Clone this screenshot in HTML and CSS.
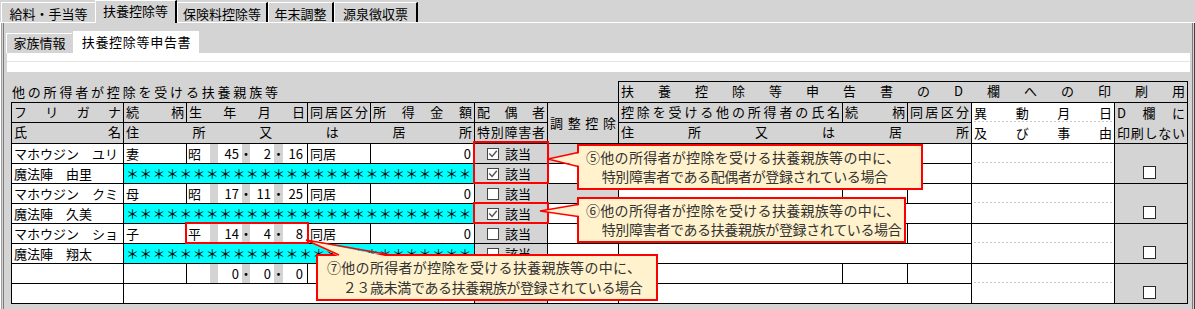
FILE: index.html
```html
<!DOCTYPE html>
<html lang="ja">
<head>
  <meta charset="UTF-8">
  <title>扶養控除等申告書</title>
  <link rel="stylesheet" href="styles.css">
</head>
<body>
  <div class="tabs">
    <div class="tab t1">給料・手当等</div>
    <div class="tab active">扶養控除等</div>
    <div class="tab t3">保険料控除等</div>
    <div class="tab t4">年末調整</div>
    <div class="tab t5">源泉徴収票</div>
  </div>

  <div class="page">
    <div class="subtabs">
      <div class="subtab">家族情報</div>
      <div class="subtab current">扶養控除等申告書</div>
    </div>
    <div class="band"></div>

    <div class="sheet">
      <div class="grid head">
        <div class="title j">他の所得者が控除を受ける扶養親族等</div>
        <div class="c hd j a-dhead">扶養控除等申告書のD欄への印刷用</div>
        <div class="c hd j a-kana">フリガナ</div>
        <div class="c hd j a-rel">続柄</div>
        <div class="c hd j a-birth">生年月日</div>
        <div class="c hd j a-live">同居区分</div>
        <div class="c hd j a-inc">所得金額</div>
        <div class="c hd j a-sp">配偶者</div>
        <div class="c hd j a-adj tall">調整控除</div>
        <div class="c hd j a-oname">控除を受ける他の所得者の氏名</div>
        <div class="c hd j a-orel">続柄</div>
        <div class="c hd j a-olive">同居区分</div>
        <div class="c hd a-move two"><span class="j">異動月日</span><span class="j">及び事由</span></div>
        <div class="c hd a-d two"><span class="j">D欄に</span><span class="j">印刷しない</span></div>
        <div class="c hd j a-name">氏名</div>
        <div class="c hd j a-addr">住所又は居所</div>
        <div class="c hd j a-sp2">特別障害者</div>
        <div class="c hd j a-oaddr">住所又は居所</div>
      </div>

      <!-- 1人目 -->
      <div class="grid person">
        <div class="c a-kana">マホウジン　ユリ</div>
        <div class="c a-rel">妻</div>
        <div class="c a-birth bd"><span class="era">昭</span><span class="gap"></span><span class="num">45</span><span class="dot">・</span><span class="num">2</span><span class="dot d2">・</span><span class="num last">16</span></div>
        <div class="c a-live">同居</div>
        <div class="c a-inc r">0</div>
        <div class="c a-sp chk"><span class="box on"><svg viewBox="0 0 10 10"><path d="M1.3 4.6 L4.1 7.4 L8.8 1.8"/></svg></span>該当</div>
        <div class="c a-adj off"></div>
        <div class="c a-oname"></div>
        <div class="c a-orel"></div>
        <div class="c a-olive"></div>
        <div class="c a-move"></div>
        <div class="c a-d dcell"><span class="box big"></span></div>
        <div class="c a-name">魔法陣　由里</div>
        <div class="c a-addr cyan">＊＊＊＊＊＊＊＊＊＊＊＊＊＊＊＊＊＊＊＊＊＊＊＊＊＊</div>
        <div class="c a-sp2 chk"><span class="box on"><svg viewBox="0 0 10 10"><path d="M1.3 4.6 L4.1 7.4 L8.8 1.8"/></svg></span>該当</div>
        <div class="c a-adj2"></div>
        <div class="c a-oaddr"></div>
        <div class="mark m-both"></div>
      </div>

      <!-- 2人目 -->
      <div class="grid person">
        <div class="c a-kana">マホウジン　クミ</div>
        <div class="c a-rel">母</div>
        <div class="c a-birth bd"><span class="era">昭</span><span class="gap"></span><span class="num">17</span><span class="dot">・</span><span class="num">11</span><span class="dot d2">・</span><span class="num last">25</span></div>
        <div class="c a-live">同居</div>
        <div class="c a-inc r">0</div>
        <div class="c a-sp chk"><span class="box"></span>該当</div>
        <div class="c a-adj off"></div>
        <div class="c a-oname"></div>
        <div class="c a-orel"></div>
        <div class="c a-olive"></div>
        <div class="c a-move"></div>
        <div class="c a-d dcell"><span class="box big"></span></div>
        <div class="c a-name">魔法陣　久美</div>
        <div class="c a-addr cyan">＊＊＊＊＊＊＊＊＊＊＊＊＊＊＊＊＊＊＊＊＊＊＊＊＊＊</div>
        <div class="c a-sp2 chk"><span class="box on"><svg viewBox="0 0 10 10"><path d="M1.3 4.6 L4.1 7.4 L8.8 1.8"/></svg></span>該当</div>
        <div class="c a-adj2"></div>
        <div class="c a-oaddr"></div>
        <div class="mark m-low"></div>
      </div>

      <!-- 3人目 -->
      <div class="grid person">
        <div class="c a-kana">マホウジン　ショ</div>
        <div class="c a-rel">子</div>
        <div class="c a-birth bd"><span class="era">平</span><span class="gap"></span><span class="num">14</span><span class="dot">・</span><span class="num">4</span><span class="dot d2">・</span><span class="num last">8</span></div>
        <div class="c a-live">同居</div>
        <div class="c a-inc r">0</div>
        <div class="c a-sp chk"><span class="box"></span>該当</div>
        <div class="c a-adj"></div>
        <div class="c a-oname"></div>
        <div class="c a-orel"></div>
        <div class="c a-olive"></div>
        <div class="c a-move"></div>
        <div class="c a-d dcell"><span class="box big"></span></div>
        <div class="c a-name">魔法陣　翔太</div>
        <div class="c a-addr cyan">＊＊＊＊＊＊＊＊＊＊＊＊＊＊＊＊＊＊＊＊＊＊＊＊＊＊</div>
        <div class="c a-sp2 chk"><span class="box"></span>該当</div>
        <div class="c a-adj2"></div>
        <div class="c a-oaddr"></div>
        <div class="mark m-birth"></div>
      </div>

      <!-- 4人目（空欄） -->
      <div class="grid person">
        <div class="c a-kana"></div>
        <div class="c a-rel"></div>
        <div class="c a-birth bd"><span class="era"></span><span class="gap"></span><span class="num">0</span><span class="dot">・</span><span class="num">0</span><span class="dot d2">・</span><span class="num last">0</span></div>
        <div class="c a-live"></div>
        <div class="c a-inc r"></div>
        <div class="c a-sp chk"></div>
        <div class="c a-adj"></div>
        <div class="c a-oname"></div>
        <div class="c a-orel"></div>
        <div class="c a-olive"></div>
        <div class="c a-move"></div>
        <div class="c a-d dcell"><span class="box big"></span></div>
        <div class="c a-name"></div>
        <div class="c a-addr"></div>
        <div class="c a-sp2 chk"></div>
        <div class="c a-adj2"></div>
        <div class="c a-oaddr"></div>
      </div>
    </div>
  </div>

  <div class="callout n5"><span class="l1">⑤他の所得者が控除を受ける扶養親族等の中に、</span><span class="l2">　特別障害者である配偶者が登録されている場合</span></div>
  <div class="callout n6"><span class="l1">⑥他の所得者が控除を受ける扶養親族等の中に、</span><span class="l2">　特別障害者である扶養親族が登録されている場合</span></div>
  <div class="callout n7"><span class="l1">⑦他の所得者が控除を受ける扶養親族等の中に、</span><span class="l2">　２３歳未満である扶養親族が登録されている場合</span></div>

  <svg class="pointers" width="1195" height="309" viewBox="0 0 1195 309">
    <polygon class="fill" points="580,153 548,159 580,166"/>
    <polyline class="edge" points="578,152.5 548,159 578,166.5"/>
    <polygon class="fill" points="580,205 540,211 580,216"/>
    <polyline class="edge" points="578,204.5 540,211 578,216.5"/>
    <polygon class="fill" points="340,257 306,240 390,257"/>
    <polyline class="edge" points="339,255 306,240 391,255"/>
  </svg>
</body>
</html>
```

FILE: styles.css
```css
body {
  margin: 0;
  width: 1195px;
  height: 309px;
  overflow: hidden;
  background: #d4d4d4;
  font-family: "Noto Sans CJK JP", "Noto Sans", sans-serif;
  font-size: 13px;
  color: #000;
}

/* 上のタブ */
.tabs {
  display: flex;
  align-items: flex-end;
  height: 23px;
  box-sizing: border-box;
  padding-left: 1px;
  border-bottom: 1px solid #fff;
}

.tab {
  height: 20px;
  box-sizing: border-box;
  padding-top: 2px;
  line-height: 17px;
  text-align: center;
  border-top: 1px solid #fff;
  border-left: 1px solid #fff;
  border-right: 2px solid #000;
}

.t1 { width: 94px; border-right: 0; }
.t3 { width: 91px; }
.t4 { width: 66px; }
.t5 { width: 84px; }

.tab.active {
  width: 82px;
  height: 23px;
  margin-bottom: -1px;
  padding-top: 1px;
  background: #d4d4d4;
}

/* 外枠 */
.page {
  height: 286px;
  background:
    linear-gradient(90deg, #fff 0 1px, #a0a0a0 1px 2px, transparent 2px 3px, #7a7a7a 3px 4px) left top / 4px 100% no-repeat,
    linear-gradient(90deg, #7a7a7a 0 1px, transparent 1px 2px, #404040 2px 3px) right top / 3px 100% no-repeat,
    #d4d4d4;
}

.subtabs {
  display: flex;
  align-items: flex-end;
  height: 30px;
  padding-left: 6px;
}

.subtab {
  width: 66px;
  height: 20px;
  box-sizing: border-box;
  line-height: 18px;
  text-align: center;
  border-top: 1px solid #fff;
  border-left: 1px solid #fff;
}

.subtab.current {
  width: 126px;
  height: 22px;
  margin-left: 1px;
  line-height: 20px;
  letter-spacing: 0.7px;
  background: #fff;
}

.band {
  height: 19px;
  margin: 0 5px 0 7px;
  background: linear-gradient(#fff 0 8px, #e4e4e4 8px 9px, #fff 9px);
}

/* 表 */
.sheet {
  margin: 9px 0 0 11px;
}

.grid {
  display: grid;
  grid-template-columns: 112px 63px 121px 63px 104px 73px 71px 224px 65px 64px 143px 73px;
}

.head {
  grid-template-rows: 21px 20px 21px;
  grid-template-areas:
    "title title title title title title title dhead dhead dhead dhead dhead"
    "kana rel birth live inc sp adj oname orel olive move d"
    "name addr addr addr addr sp2 adj oaddr oaddr oaddr move d";
}

.person {
  grid-template-rows: 20px 20px;
  grid-template-areas:
    "kana rel birth live inc sp adj oname orel olive move d"
    "name addr addr addr addr sp2 adj2 oaddr oaddr oaddr move d";
}

.a-dhead { grid-area: dhead; }
.a-kana { grid-area: kana; }
.a-rel { grid-area: rel; }
.a-birth { grid-area: birth; }
.a-live { grid-area: live; }
.a-inc { grid-area: inc; }
.a-sp { grid-area: sp; }
.a-adj { grid-area: adj; }
.a-adj2 { grid-area: adj2; }
.a-oname { grid-area: oname; }
.a-orel { grid-area: orel; }
.a-olive { grid-area: olive; }
.a-move { grid-area: move; }
.a-d { grid-area: d; }
.a-name { grid-area: name; }
.a-addr { grid-area: addr; }
.a-sp2 { grid-area: sp2; }
.a-oaddr { grid-area: oaddr; }

.title {
  grid-area: title;
  width: 266px;
  padding: 1px 0 0 1px;
  line-height: 19px;
}

.c {
  border: 1px solid #000;
  margin: 0 -1px -1px 0;
  padding: 0 2px;
  line-height: 19px;
  white-space: nowrap;
  overflow: hidden;
  background: #fff;
}

.hd {
  background: transparent;
  line-height: 18px;
}

.j {
  text-align: justify;
  text-align-last: justify;
}

.tall {
  line-height: 40px;
}

.two span {
  display: block;
  line-height: 20px;
}

.r {
  text-align: right;
  padding-right: 3px;
}

.off {
  background: #d4d4d4;
}

.cyan {
  background: #00ffff;
  letter-spacing: 0.3px;
}

/* 生年月日 */
.bd {
  display: flex;
  padding: 0;
}

.era {
  width: 23px;
  padding-left: 1px;
  box-sizing: border-box;
}

.gap {
  width: 8px;
  background: #d4d4d4;
}

.num {
  width: 24px;
  box-sizing: border-box;
  padding-right: 3px;
  text-align: right;
}

.num.last {
  flex: 1;
  padding-right: 4px;
}

.dot {
  width: 8px;
  display: flex;
  justify-content: center;
  background: #d4d4d4;
}

.dot.d2 {
  width: 9px;
}

/* チェックボックス */
.chk {
  display: flex;
  align-items: center;
  gap: 6px;
  padding-left: 12px;
  background: #d4d4d4;
}

.box {
  display: inline-block;
  width: 12px;
  height: 12px;
  box-sizing: border-box;
  border: 1px solid #444;
  background: #fff;
}

.box svg {
  display: block;
  width: 10px;
  height: 10px;
  fill: none;
  stroke: #555;
  stroke-width: 1.4;
}

.box.big {
  width: 13px;
  height: 13px;
  border-color: #2a2a2a;
}

.dcell {
  display: flex;
  flex-direction: column;
  align-items: center;
  justify-content: flex-end;
  padding: 0 4px 4px 0;
  background: #d4d4d4;
}

.a-move {
  background:
    linear-gradient(90deg, #c8c8c8 50%, transparent 50%) 2px 18px / 4px 1px repeat-x,
    #fff;
  background-clip: padding-box;
}

/* 赤枠 */
.mark {
  border: 2px solid #f00;
  margin: -2px -2px -1px -1px;
  z-index: 2;
}

.m-both { grid-column: 6; grid-row: 1 / 3; }
.m-low { grid-column: 6; grid-row: 2; margin-top: -1px; }
.m-birth { grid-column: 3; grid-row: 1; margin-top: -1px; }

/* 吹き出し */
.callout {
  position: absolute;
  z-index: 3;
  box-sizing: border-box;
  border: 2px solid #f00;
  background: #fff2cc;
  color: #333;
  font-size: 14px;
  line-height: 19px;
  padding: 2px 0 0 7px;
  white-space: nowrap;
}

.callout span {
  display: block;
}

.callout .l1 {
  letter-spacing: 0.3px;
}

.callout .l2 {
  letter-spacing: -0.35px;
  padding-left: 2px;
}

.n5 { left: 577px; top: 144px; width: 346px; height: 46px; }
.n6 { left: 577px; top: 197px; width: 329px; height: 46px; }
.n7 { left: 316px; top: 254px; width: 342px; height: 47px; line-height: 20px; padding: 1px 0 0 9px; }

.pointers {
  position: absolute;
  left: 0;
  top: 0;
  z-index: 4;
  pointer-events: none;
}

.pointers .fill {
  fill: #fff2cc;
}

.pointers .edge {
  fill: none;
  stroke: #f00;
  stroke-width: 1.5;
}
```
